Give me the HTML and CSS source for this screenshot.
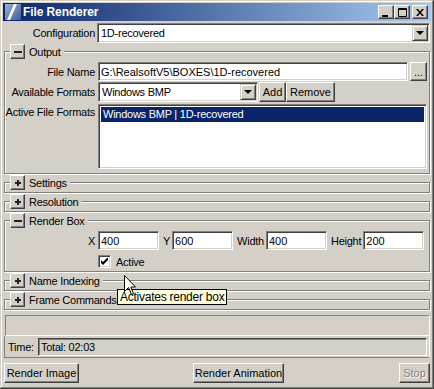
FILE: index.html
```html
<!DOCTYPE html>
<html lang="en">
<head>
  <meta charset="UTF-8">
  <title>File Renderer</title>
  <link rel="stylesheet" href="styles.css">
</head>
<body>

  <div class="window">
    <div class="titlebar">
      <svg class="app-icon" width="16" height="16" viewBox="0 0 16 16">
        <defs>
          <linearGradient id="iconGrad" x1="0" y1="0" x2="1" y2="1">
            <stop offset="0" stop-color="#9db3d3"/>
            <stop offset="1" stop-color="#3b5c92"/>
          </linearGradient>
        </defs>
        <rect width="16" height="16" fill="url(#iconGrad)"/>
        <path d="M2 16 L9 0 L12 0 L5 16 Z" fill="#f4f6fa"/>
      </svg>
      <span class="title">File Renderer</span>
      <div class="caption-btns">
        <button class="cap">
          <svg width="8" height="9" viewBox="0 0 8 9"><rect x="0" y="7" width="6" height="2" fill="#000"/></svg>
        </button>
        <button class="cap">
          <svg width="9" height="9" viewBox="0 0 9 9"><path d="M0.5 0.5H8.5V8.5H0.5Z M0.5 1.5H8.5" fill="none" stroke="#000"/></svg>
        </button>
        <button class="cap cap-close">
          <svg width="8" height="7" viewBox="0 0 8 7"><path d="M0 0H2L4 2.5L6 0H8L5 3.5L8 7H6L4 4.5L2 7H0L3 3.5Z" fill="#000"/></svg>
        </button>
      </div>
    </div>

    <div class="content">
      <div class="config-row">
        <span class="lbl">Configuration</span>
        <div class="combo sunken">
          <span class="combo-text">1D-recovered</span>
          <span class="drop"></span>
        </div>
      </div>

      <fieldset class="group group-first">
        <legend><span class="toggle minus"></span>Output</legend>
        <div class="form-grid">
          <span class="lbl">File Name</span>
          <div class="field-row">
            <input class="input sunken" type="text" value="G:\RealsoftV5\BOXES\1D-recovered">
            <button class="btn btn-browse">...</button>
          </div>

          <span class="lbl">Available Formats</span>
          <div class="field-row">
            <div class="combo sunken combo-formats">
              <span class="combo-text">Windows BMP</span>
              <span class="drop"></span>
            </div>
            <button class="btn btn-add">Add</button>
            <button class="btn btn-remove">Remove</button>
          </div>

          <span class="lbl lbl-top">Active File Formats</span>
          <div class="list sunken">
            <div class="list-item selected">Windows BMP | 1D-recovered</div>
          </div>
        </div>
      </fieldset>

      <fieldset class="group">
        <legend><span class="toggle plus"></span>Settings</legend>
      </fieldset>

      <fieldset class="group">
        <legend><span class="toggle plus"></span>Resolution</legend>
      </fieldset>

      <fieldset class="group">
        <legend><span class="toggle minus"></span>Render Box</legend>
        <div class="form-grid box-grid">
          <span class="lbl">X</span>
          <div class="field-row">
            <input class="input sunken num" type="text" value="400">
            <span class="inline-lbl">Y</span>
            <input class="input sunken num" type="text" value="600">
            <span class="inline-lbl">Width</span>
            <input class="input sunken num" type="text" value="400">
            <span class="inline-lbl">Height</span>
            <input class="input sunken num" type="text" value="200">
          </div>

          <span></span>
          <div class="check-row">
            <span class="check sunken">
              <svg width="7" height="7" viewBox="0 0 7 7"><path d="M0 2L0 5L2 7L7 2L7 -1L2 4Z" fill="#000"/></svg>
            </span>
            <span>Active</span>
          </div>
        </div>
      </fieldset>

      <fieldset class="group">
        <legend><span class="toggle plus"></span>Name Indexing</legend>
      </fieldset>

      <fieldset class="group">
        <legend><span class="toggle plus"></span>Frame Commands</legend>
      </fieldset>

      <div class="progress"></div>
      <div class="timebar">
        <span class="time-lbl">Time:</span>
        <div class="time-field">Total: 02:03</div>
      </div>

      <div class="actions">
        <button class="btn btn-image">Render Image</button>
        <button class="btn btn-anim">Render Animation</button>
        <button class="btn btn-stop" disabled>Stop</button>
      </div>
    </div>

    <div class="tooltip">Activates render box</div>
    <svg class="cursor" width="13" height="21" viewBox="0 0 13 21">
      <path d="M0.5 0.5V16.5L4.5 12.5L7.5 19.5L9.5 18.5L6.8 12H11.5Z" fill="#fff" stroke="#000" stroke-linejoin="miter"/>
    </svg>
  </div>

</body>
</html>
```

FILE: styles.css
```css
* {
  box-sizing: border-box;
}

body {
  margin: 0;
  background: #d4d0c8;
  font-family: 'Liberation Sans', Arial, sans-serif;
  font-size: 11px;
  letter-spacing: -0.25px;
  color: #000;
}

.window {
  position: relative;
  width: 434px;
  height: 389px;
  padding: 3px;
  background: #d4d0c8;
  box-shadow: inset -1px -1px #404040, inset 1px 1px #d4d0c8,
              inset -2px -2px #808080, inset 2px 2px #fff;
  display: flex;
  flex-direction: column;
}

/* title bar */
.titlebar {
  height: 18px;
  display: flex;
  align-items: center;
  padding: 0 3px 0 2px;
  background: linear-gradient(to right, #0a246a, #a6caf0);
  color: #fff;
}

.app-icon {
  margin-right: 2px;
}

.title {
  font-weight: bold;
  font-size: 12px;
  letter-spacing: -0.1px;
}

.caption-btns {
  margin-left: auto;
  display: flex;
}

.cap {
  width: 16px;
  height: 14px;
  padding: 0;
  display: flex;
  align-items: center;
  justify-content: center;
  background: #d4d0c8;
  border: 1px solid;
  border-color: #fff #404040 #404040 #fff;
  box-shadow: inset -1px -1px #808080;
}

.cap-close {
  margin-left: 2px;
}

/* shared control looks */
.sunken {
  background: #fff;
  border: 1px solid;
  border-color: #808080 #fff #fff #808080;
  box-shadow: inset 1px 1px #404040, inset -1px -1px #d4d0c8;
}

.btn {
  height: 20px;
  padding: 0;
  font: inherit;
  color: #000;
  background: #d4d0c8;
  border: 1px solid;
  border-color: #fff #404040 #404040 #fff;
  box-shadow: inset -1px -1px #808080;
}

.content {
  flex: 1;
  padding: 2px 1px 0;
  display: flex;
  flex-direction: column;
}

.lbl {
  text-align: right;
  white-space: nowrap;
}

.config-row {
  display: grid;
  grid-template-columns: 91px 1fr;
  column-gap: 2px;
  align-items: center;
}

.combo {
  height: 20px;
  padding: 1px;
  display: flex;
  align-items: center;
}

.combo-text {
  padding-left: 2px;
}

.drop {
  margin-left: auto;
  width: 16px;
  height: 16px;
  background: #d4d0c8;
  border: 1px solid;
  border-color: #d4d0c8 #404040 #404040 #d4d0c8;
  box-shadow: inset 1px 1px #fff, inset -1px -1px #808080;
  display: flex;
  align-items: center;
  justify-content: center;
}

.drop::before {
  content: "";
  border-left: 4px solid transparent;
  border-right: 4px solid transparent;
  border-top: 4px solid #000;
  margin-left: -1px;
}

/* collapsible groups */
.group {
  margin: 1px 0 0;
  padding: 0 2px 2px 0;
  min-width: 0;
  border: 1px solid #808080;
  box-shadow: inset 1px 1px #fff, 1px 1px #fff;
}

.group-first {
  padding-bottom: 3px;
}

.group legend {
  display: flex;
  align-items: center;
  height: 15px;
  margin-left: 5px;
  padding: 0 3px 0 0;
  background: #d4d0c8;
}

.toggle {
  position: relative;
  width: 15px;
  height: 15px;
  margin-right: 4px;
  background: #d4d0c8;
  border: 1px solid;
  border-color: #fff #404040 #404040 #fff;
  box-shadow: inset -1px -1px #808080;
}

.toggle::before,
.toggle::after {
  content: "";
  position: absolute;
  background: #222;
}

.minus::before {
  left: 3px;
  top: 6px;
  width: 8px;
  height: 2px;
}

.plus::before {
  left: 4px;
  top: 6px;
  width: 6px;
  height: 2px;
}

.plus::after {
  left: 6px;
  top: 4px;
  width: 2px;
  height: 6px;
}

.form-grid {
  display: grid;
  grid-template-columns: 90px 1fr;
  column-gap: 3px;
  row-gap: 1px;
  align-items: center;
  padding: 3px 0 1px;
}

.lbl-top {
  align-self: start;
  padding-top: 2px;
  margin-top: 1px;
}

.field-row {
  display: flex;
  align-items: center;
}

.input {
  height: 19px;
  min-width: 0;
  flex: 1;
  padding: 0 2px;
  font: inherit;
  color: #000;
  outline: none;
}

.btn-browse {
  width: 17px;
  height: 19px;
  margin-left: 2px;
}

.combo-formats {
  width: 160px;
}

.btn-add {
  width: 27px;
  margin-left: 1px;
}

.btn-remove {
  width: 49px;
}

.list {
  height: 65px;
  margin-top: 1px;
  padding: 2px;
}

.list-item {
  height: 15px;
  line-height: 15px;
  padding-left: 2px;
}

.selected {
  background: #0a246a;
  color: #fff;
}

/* render box */
.box-grid {
  row-gap: 5px;
  padding: 3px 0 1px;
}

.num {
  width: 61px;
  flex: none;
}

.inline-lbl {
  margin: 0 2px 0 4px;
}

.check-row {
  display: flex;
  align-items: center;
  gap: 5px;
}

.check {
  width: 13px;
  height: 13px;
  display: flex;
  align-items: center;
  justify-content: center;
}

/* status */
.progress {
  height: 21px;
  margin: 5px 0 0 1px;
  border: 1px solid;
  border-color: #808080 #fff #fff #808080;
}

.timebar {
  height: 22px;
  display: flex;
  align-items: center;
  padding: 0 2px 0 3px;
  border: 1px solid;
  border-color: #d4d0c8 #fff #808080 #808080;
}

.time-lbl {
  width: 30px;
}

.time-field {
  flex: 1;
  height: 18px;
  line-height: 16px;
  padding-left: 2px;
  border: 1px solid;
  border-color: #404040 #fff #fff #404040;
  box-shadow: inset 1px 1px #808080;
}

.actions {
  display: flex;
  margin-top: 5px;
}

.btn-image {
  width: 75px;
}

.btn-anim {
  width: 91px;
  margin-left: 114px;
}

.btn-stop {
  width: 31px;
  margin-left: auto;
  color: #808080;
  text-shadow: 1px 1px #fff;
}

/* hover overlays */
.tooltip {
  position: absolute;
  left: 117px;
  top: 289px;
  height: 16px;
  line-height: 14px;
  padding: 0 2px;
  background: #ffffe1;
  border: 1px solid #000;
  font-size: 12px;
}

.cursor {
  position: absolute;
  left: 124px;
  top: 275px;
}
```
